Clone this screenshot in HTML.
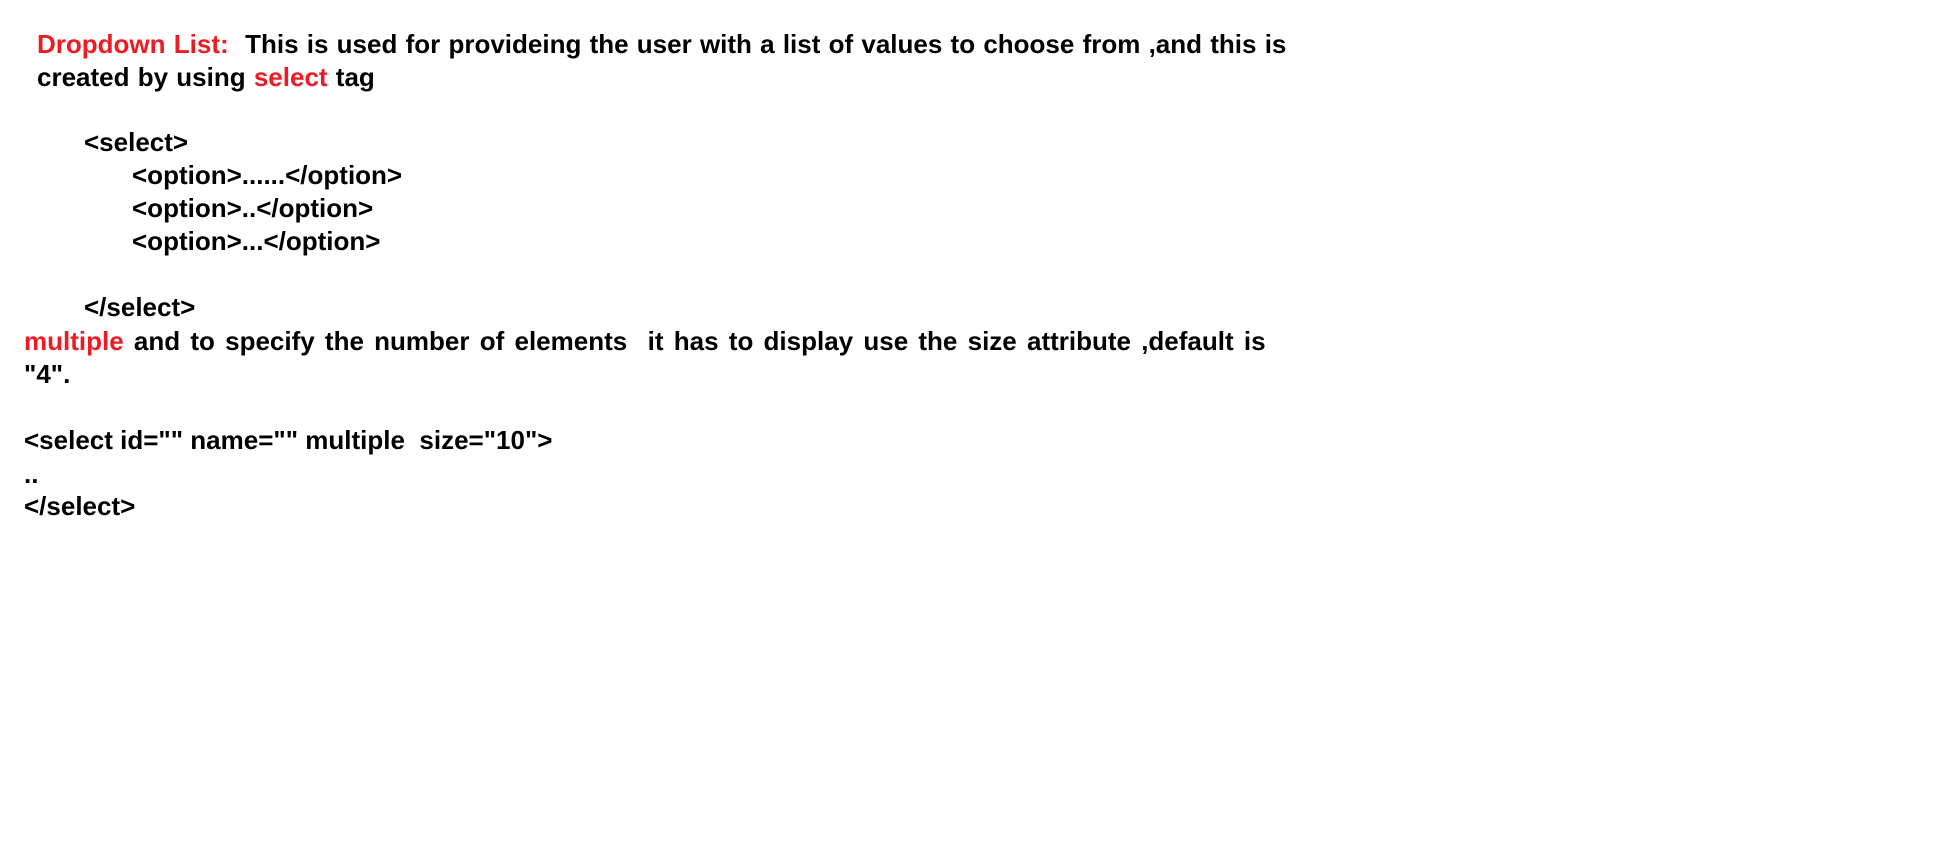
<!DOCTYPE html>
<html><head><meta charset="utf-8"><style>
html,body{margin:0;padding:0;background:#fff;width:1956px;height:846px;overflow:hidden}
.l{position:absolute;font-family:"Liberation Sans",sans-serif;font-weight:bold;font-size:26px;line-height:34px;color:#000;white-space:pre;word-spacing:1px}
.r{color:#ed1c24}
</style></head><body>
<div class="l" style="left:37px;top:27px"><span class="r">Dropdown List:</span>  This is used for provideing the user with a list of values to choose from ,and this is</div>
<div class="l" style="left:37px;top:60px">created by using <span class="r">select</span> tag</div>
<div class="l" style="left:84px;top:125px">&lt;select&gt;</div>
<div class="l" style="left:132px;top:158px">&lt;option&gt;......&lt;/option&gt;</div>
<div class="l" style="left:132px;top:191px">&lt;option&gt;..&lt;/option&gt;</div>
<div class="l" style="left:132px;top:224px">&lt;option&gt;...&lt;/option&gt;</div>
<div class="l" style="left:84px;top:290px">&lt;/select&gt;</div>
<div class="l" style="left:24px;top:324px;word-spacing:3px"><span class="r">multiple</span> and to specify the number of elements  it has to display use the size attribute ,default is</div>
<div class="l" style="left:24px;top:357px">"4".</div>
<div class="l" style="left:24px;top:423px;word-spacing:0">&lt;select id="" name="" multiple  size="10"&gt;</div>
<div class="l" style="left:24px;top:457px">..</div>
<div class="l" style="left:24px;top:489px">&lt;/select&gt;</div>
</body></html>
